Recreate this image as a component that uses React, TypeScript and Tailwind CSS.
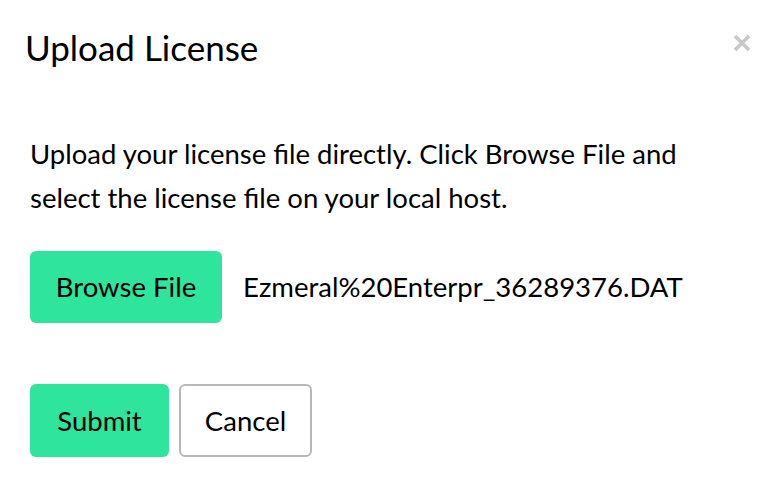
import React from "react";

export default function App() {
  return (
    <div className="w-[772px] h-[482px] bg-white relative text-black" style={{ fontFamily: "Lato, 'Noto Sans', sans-serif" }}>
      <div className="flex items-start justify-between pl-[25px] pr-[20px] pt-[26px]">
        <h1 className="text-[35px] leading-[42px] font-normal">Upload License</h1>
        <button className="mt-[7px]" aria-label="close">
          <svg width="20" height="20" viewBox="0 0 20 20">
            <path d="M3 3 L17 17 M17 3 L3 17" stroke="#c8c8c8" strokeWidth="3.6" strokeLinecap="butt" />
          </svg>
        </button>
      </div>
      <div className="pl-[30px] pt-[64px]">
        <p className="text-[27.5px] leading-[44px] w-[700px]">
          Upload your license file directly. Click Browse File and<br />select the license file on your local host.
        </p>
        <div className="flex items-center gap-[21px] mt-[31px]">
          <button className="w-[192px] h-[72px] rounded-[6px] bg-[#2fe59d] text-[27.5px]">Browse File</button>
          <span className="text-[27.5px]">Ezmeral%20Enterpr_36289376.DAT</span>
        </div>
        <div className="flex gap-[10px] mt-[61px]">
          <button className="w-[139px] h-[73px] rounded-[6px] bg-[#2fe59d] text-[27.5px]">Submit</button>
          <button className="w-[133px] h-[73px] rounded-[6px] border-2 border-[#b8b8b8] bg-white text-[27.5px]">Cancel</button>
        </div>
      </div>
    </div>
  );
}
